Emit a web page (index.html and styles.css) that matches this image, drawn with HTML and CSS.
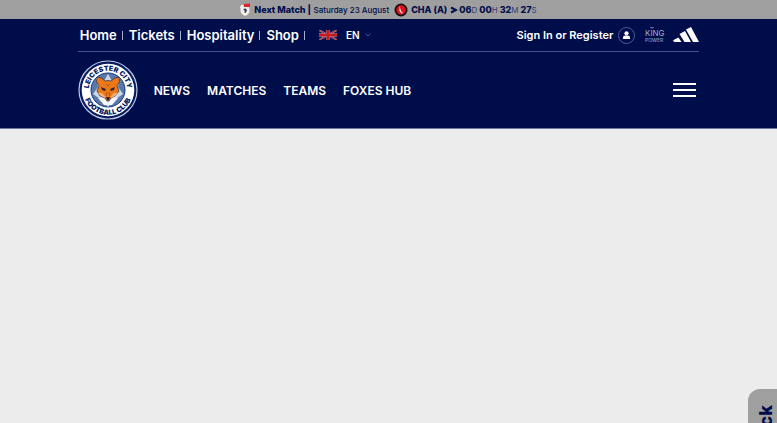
FILE: index.html
```html
<!DOCTYPE html>
<html lang="en">
<head>
    <meta charset="UTF-8">
    <meta name="viewport" content="width=device-width, initial-scale=1.0">
    <title>Leicester City</title>
    <link rel="stylesheet" href="styles.css">
</head>
<body>
    <!-- Next match bar -->
    <div class="match-bar">
        <svg class="league" viewBox="0 0 12 13" aria-hidden="true">
            <path d="M2 2 L10 1 L10.500 9 Q9 12 6 13 Q2 11 1.500 8Z" fill="#f4f0df"/>
            <path d="M4.500 1 L11 0.500 V4 H5Z" fill="#df2430"/>
            <path d="M1 3.500 L4.500 3 V5 L1 5.500Z" fill="#eee"/>
            <path d="M4 6 L7 5.500 L8 7.500 L6.500 10 L5 9 L6 8Z" fill="#253879"/>
        </svg>
        <a href="#" class="match"><b>Next Match |</b> <span>Saturday 23 August</span></a>
        <svg class="opponent" viewBox="0 0 14 14" aria-hidden="true">
            <circle cx="7" cy="7" r="6.500" fill="#17100f"/>
            <circle cx="7" cy="7" r="4.700" fill="#d9161f"/>
            <path d="M5.500 3 L7 8 L9 10 L7.500 10.500 L5.500 8Z" fill="#f5e9e7"/>
        </svg>
        <b>CHA (A)</b>
        <svg class="arrow" viewBox="0 0 8 8" aria-hidden="true"><path d="M1 1.500 L6 4 L1 6.500"/></svg>
        <div class="countdown">
            <span><b>06</b>D</span>
            <span><b>00</b>H</span>
            <span><b>32</b>M</span>
            <span><b>27</b>S</span>
        </div>
    </div>

    <header class="header">
        <div class="container">
            <div class="top-row">
                <nav class="top-links">
                    <a href="#">Home</a>
                    <a href="#">Tickets</a>
                    <a href="#">Hospitality</a>
                    <a href="#">Shop</a>
                </nav>
                <button class="language" type="button">
                    <svg class="flag" viewBox="0 0 18 10" aria-hidden="true">
                        <path fill="#071450" d="M0 0h18v10H0z"/>
                        <path stroke="#a392a8" stroke-width="1.600" d="M0 0l18 10M18 0L0 10"/>
                        <path stroke="#c51b26" stroke-width="0.800" d="M0 0l18 10M18 0L0 10"/>
                        <path stroke="#b98b9c" stroke-width="3.400" d="M9 0v10M0 5h18"/>
                        <path stroke="#cb1720" stroke-width="2.600" d="M9 0v10M0 5h18"/>
                    </svg>
                    EN
                    <svg class="chevron" viewBox="0 0 6 4" aria-hidden="true"><path d="M0.500 0.500 L3 3 L5.500 0.500"/></svg>
                </button>
                <a href="#" class="sign-in">
                    Sign In or Register
                    <svg class="user" viewBox="0 0 17 17" aria-hidden="true">
                        <circle cx="8.500" cy="8.500" r="8" fill="none" stroke="#496096"/>
                        <circle cx="8.500" cy="6.300" r="2.100" fill="#fff"/>
                        <path d="M5 12 V10.500 Q5 8.500 7 8.500 H10 Q12 8.500 12 10.500 V12Z" fill="#fff"/>
                    </svg>
                </a>
                <a href="#" class="king-power" aria-label="King Power">
                    <svg viewBox="0 0 20 16" aria-hidden="true">
                        <path d="M5 0.500h4M7 0v2" stroke="#536799" fill="none"/>
                        <text x="0" y="9" class="king">KING</text>
                        <text x="0" y="15" class="power">POWER</text>
                    </svg>
                </a>
                <a href="#" class="adidas" aria-label="adidas">
                    <svg viewBox="0 0 26 16" aria-hidden="true">
                        <path fill="#fff" d="M0 13.200 L5.500 10.500 L8.500 15 H1.200Z M6.500 7 L12 4 L18 15 H11.500Z M13 2.500 L18 0 L26 15 H20Z"/>
                    </svg>
                </a>
            </div>

            <div class="main-row">
                <a href="#" class="crest" aria-label="Leicester City Football Club">
                    <svg viewBox="0 0 60 60" aria-hidden="true">
                        <defs>
                            <path id="arc-top" d="M11.060 33 A19.200 19.200 0 1 1 48.940 33"/>
                            <path id="arc-bottom" d="M5.200 30 A24.800 24.800 0 0 0 54.800 30"/>
                        </defs>
                        <circle cx="30" cy="30" r="29" fill="#0a1c61" stroke="#bac9e5" stroke-width="1.200"/>
                        <circle cx="30" cy="30" r="26.300" fill="#fff"/>
                        <circle cx="30" cy="30" r="17" fill="#5878aa"/>
                        <circle cx="30" cy="30" r="17" fill="none" stroke="#14387d"/>
                        <path d="M30 14 L34 21 L42 18 L40 27 L45 34 L38 39 L30 47 L22 39 L15 34 L20 27 L18 18 L26 21Z" fill="#c9d7e8"/>
                        <path d="M20 38 L26 37 L30 43 L34 37 L40 38 L34 45 H26Z" fill="#f7f8fb"/>
                        <path d="M19 17 Q24 17 27 21 Q30 20 33 21 Q37 17 41 17 Q43 22 39 26 L41 31 L37 36 L33 38 L31 41 H29 L27 38 L22 36 L19 31 L21 26 Q17 22 19 17Z" fill="#ec7817" stroke="#252649" stroke-width="0.700"/>
                        <path d="M20 33 L24 33 L27 36 V38 L23 36Z M40 33 L36 33 L33 36 V38 L37 36Z" fill="#f4b176"/>
                        <path d="M23 27 L28 29 L27 31 L24 30Z M37 27 L32 29 L33 31 L36 30Z M28 37 H32 L31 40 H29Z" fill="#3a2430"/>
                        <path d="M28 24 L30 26 L32 24 M29 32 L28 36 M31 32 L32 36" fill="none" stroke="#9d4518" stroke-width="0.700"/>
                        <text class="crest-text"><textPath href="#arc-top" startOffset="50%">LEICESTER CITY</textPath></text>
                        <text class="crest-text"><textPath href="#arc-bottom" startOffset="50%">FOOTBALL CLUB</textPath></text>
                    </svg>
                </a>
                <nav class="main-links">
                    <a href="#">NEWS</a>
                    <a href="#">MATCHES</a>
                    <a href="#">TEAMS</a>
                    <a href="#">FOXES HUB</a>
                </nav>
                <button class="menu" type="button" aria-label="Menu">
                    <span></span>
                    <span></span>
                    <span></span>
                </button>
            </div>
        </div>
    </header>

    <main></main>

    <button class="feedback" type="button"><span>Feedback</span></button>
</body>
</html>
```
FILE: styles.css
```css
* {
    box-sizing: border-box;
}
body {
    margin: 0;
    min-height: 100vh;
    background-color: #ececec;
    color: #fff;
    font-family: Inter, sans-serif;
    font-weight: 600;
}
a {
    color: inherit;
    text-decoration: none;
}
button {
    padding: 0;
    border: 0;
    background: none;
    color: inherit;
    font: inherit;
    cursor: pointer;
}
svg {
    display: block;
    flex: none;
}

/* Next match bar */
.match-bar {
    display: flex;
    justify-content: center;
    align-items: center;
    gap: 3px;
    height: 19px;
    padding-right: 1px;
    background-color: #9f9f9f;
    color: #000d4b;
    font-size: 9px;
    font-weight: 400;
    white-space: nowrap;
}
.match-bar b {
    font-weight: 800;
}
.match span {
    font-size: 8px;
    font-weight: 500;
}
.league {
    width: 12px;
    height: 13px;
}
.opponent {
    width: 14px;
    height: 14px;
    margin-left: 2px;
}
.arrow {
    width: 8px;
    height: 8px;
    margin-right: -2px;
    fill: none;
    stroke: #000d4b;
    stroke-width: 2;
}
.countdown {
    display: flex;
    gap: 2px;
}
.countdown span {
    color: #33406f;
    font-size: 8px;
}
.countdown b {
    color: #000d4b;
    font-size: 9px;
}

/* Header */
.header {
    background-color: #000d4b;
    border-bottom: 1px solid #6c7697;
}
.container {
    width: 80%;
    margin: 0 auto;
}
.top-row {
    display: flex;
    align-items: center;
    height: 33px;
    border-bottom: 1px solid #405490;
    white-space: nowrap;
}
.top-links {
    display: flex;
    font-size: 13px;
}
.top-links a {
    display: flex;
    align-items: center;
    padding-left: 2px;
}
.top-links a + a {
    padding-left: 6px;
}
.top-links a::after {
    content: "";
    width: 1px;
    height: 9px;
    margin-left: 5px;
    background-color: #a4b0d0;
}
.language {
    display: flex;
    align-items: center;
    gap: 5px;
    margin-left: 14px;
    font-size: 10px;
}
.flag {
    width: 18px;
    height: 10px;
    margin-right: 4px;
}
.chevron {
    width: 6px;
    height: 4px;
    fill: none;
    stroke: #405490;
}
.sign-in {
    display: flex;
    align-items: center;
    gap: 5px;
    margin-left: auto;
    font-size: 11px;
}
.user {
    width: 17px;
    height: 17px;
}
.king-power {
    margin-left: 10px;
}
.king-power svg {
    width: 20px;
    height: 16px;
    overflow: visible;
}
.king {
    fill: #a0abc9;
    font-size: 8px;
    font-weight: 400;
}
.power {
    fill: #8794ba;
    font-size: 5px;
    font-weight: 500;
}
.adidas {
    margin-left: 8px;
}
.adidas svg {
    width: 26px;
    height: 16px;
}
.main-row {
    display: flex;
    align-items: center;
    height: 76px;
}
.crest svg {
    width: 60px;
    height: 60px;
}
.crest-text {
    fill: #0a1c61;
    font-size: 7px;
    font-weight: 900;
    text-anchor: middle;
}
.main-links {
    display: flex;
    gap: 17px;
    margin-left: 16px;
    font-size: 12px;
    white-space: nowrap;
}
.menu {
    display: flex;
    flex-direction: column;
    gap: 4px;
    margin-left: auto;
    margin-right: 3px;
}
.menu span {
    width: 23px;
    height: 2px;
    background-color: #fff;
}

/* Tab over the lower right edge of the window */
.feedback {
    position: fixed;
    top: 389px;
    right: 0;
    width: 29px;
    padding: 16px 0 16px 6px;
    border-radius: 12px 0 0 12px;
    background-color: #9f9f9f;
    color: #000d4b;
    font-size: 18px;
    font-weight: 800;
}
.feedback span {
    writing-mode: vertical-rl;
    rotate: 180deg;
}
```
